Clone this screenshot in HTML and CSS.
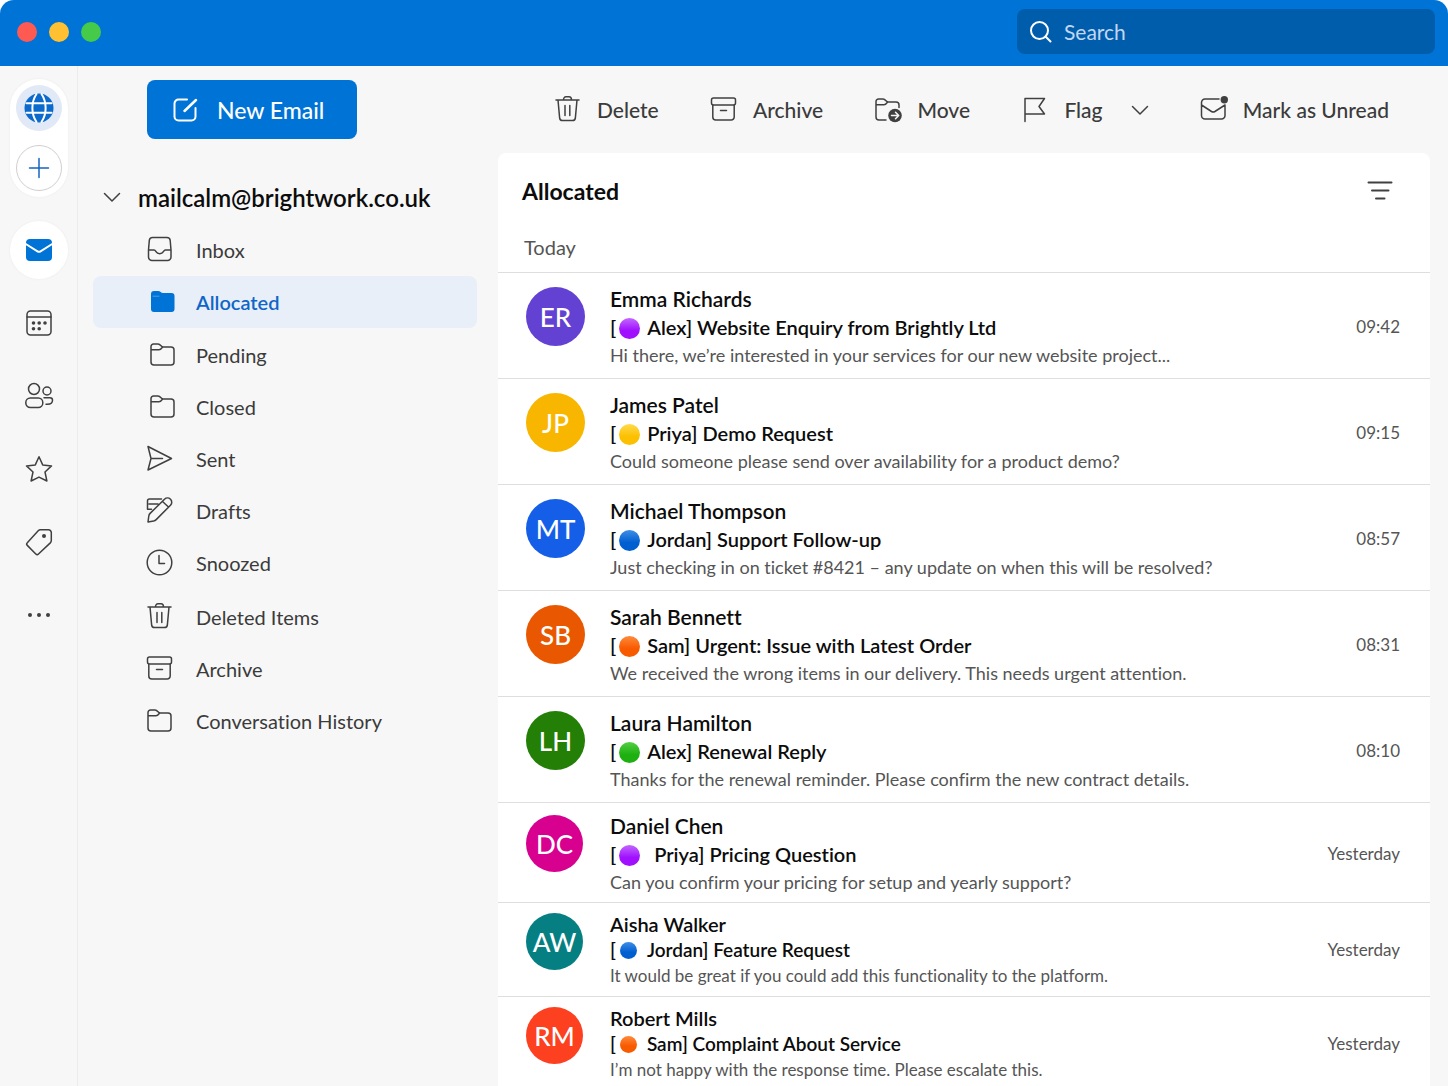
FILE: index.html
```html
<!DOCTYPE html>
<html lang="en">
<head>
  <meta charset="UTF-8">
  <meta name="viewport" content="width=device-width, initial-scale=1">
  <title>Mail - Allocated</title>
  <link rel="stylesheet" href="styles.css">
</head>
<body>

<!-- icon sprite -->
<svg class="sprite" xmlns="http://www.w3.org/2000/svg">
  <symbol id="i-folder" viewBox="0 0 28 28">
    <path d="M2 8.500V5.500a2.500 2.500 0 0 1 2.500-2.500h4.500c1.500 0 2 .6 3 1.800.7.900 1.200 1.200 2.500 1.200h7.500a3 3 0 0 1 3 3v12a3 3 0 0 1-3 3H5a3 3 0 0 1-3-3zM2 8.700h8c1.800 0 2.400-1.200 3.400-2.500"/>
  </symbol>
  <symbol id="i-trash" viewBox="0 0 28 28">
    <path d="M2 4h23M9.500 4c0-2 1-3.200 2.500-3.200h3c1.500 0 2.500 1.200 2.500 3.200M4 4l1.600 17.600a3 3 0 0 0 3 2.900h9.800a3 3 0 0 0 3-2.900L23 4M11 9.500v10M15.800 9.500v10"/>
  </symbol>
  <symbol id="i-archive" viewBox="0 0 28 28">
    <rect x="1.500" y="2" width="24" height="7" rx="2"/>
    <path d="M2.800 9v12a3 3 0 0 0 3 3h15.400a3 3 0 0 0 3-3V9M10.500 14.500h6"/>
  </symbol>
  <symbol id="i-chevron" viewBox="0 0 18 18">
    <path d="M1.500 5.500l7.500 7.500 7.500-7.500"/>
  </symbol>
</svg>

<div class="window">
  <header class="titlebar">
    <div class="lights">
      <span class="light red"></span>
      <span class="light yellow"></span>
      <span class="light green"></span>
    </div>
    <label class="search">
      <svg class="icon-search" viewBox="0 0 22 22" aria-hidden="true"><circle cx="9.500" cy="9.500" r="8.500"/><path d="M15.500 15.500l5 5"/></svg>
      <input type="search" placeholder="Search" aria-label="Search">
    </label>
  </header>

  <div class="layout">
    <!-- left rail -->
    <nav class="rail" aria-label="Apps">
      <div class="pill">
        <button class="round globe" aria-label="Accounts">
          <svg viewBox="0 0 30 30"><circle class="disc" cx="15" cy="15" r="14.500"/><path d="M12.500 1c-5.500 8-5.500 20 0 28M17.500 1c5.500 8 5.500 20 0 28M2.500 10.200h25M2.500 19.800h25"/></svg>
        </button>
        <button class="round add" aria-label="Add account">
          <svg viewBox="0 0 20 20"><path d="M10 .5v19M.5 10h19"/></svg>
        </button>
      </div>
      <button class="app active" aria-label="Mail">
        <svg viewBox="0 0 28 28"><rect class="fill" x="1" y="3" width="26" height="22" rx="4"/><path class="cut" d="M0 7.500l12.500 7.800q1.500.9 3 0L28 7.500"/></svg>
      </button>
      <button class="app" aria-label="Calendar">
        <svg viewBox="0 0 28 28"><rect x="2" y="2" width="24" height="24" rx="3.500"/><path d="M2 8h24"/><g class="dots"><circle cx="8.500" cy="14" r="1.800"/><circle cx="14.200" cy="14" r="1.800"/><circle cx="20" cy="14" r="1.800"/><circle cx="8.500" cy="19.800" r="1.800"/><circle cx="14.200" cy="19.800" r="1.800"/></g></svg>
      </button>
      <button class="app" aria-label="People">
        <svg viewBox="0 0 28 28"><circle cx="9" cy="7" r="5.500"/><circle cx="22" cy="9" r="4"/><rect x=".8" y="16" width="17" height="9.500" rx="4.500"/><path d="M19 15.800h6c1.500 0 2.500 1 2.500 2.500 0 2.500-2 4-5 4H21"/></svg>
      </button>
      <button class="app" aria-label="Favourites">
        <svg viewBox="0 0 28 28"><path d="M14 1.800l3.700 8.100 8.800 1-6.500 6.100 1.900 9-7.900-3.900-7.900 3.900 1.900-9-6.500-6.100 8.800-1z"/></svg>
      </button>
      <button class="app" aria-label="Tags">
        <svg viewBox="0 0 28 28"><path d="M15.500 1.800h8a2.800 2.800 0 0 1 2.800 2.800v8c0 1-.4 1.700-1 2.300L13.500 26c-.9.900-1.800.9-2.700 0l-8.500-8.600c-.9-.9-.9-1.800 0-2.700L13.200 2.800c.6-.6 1.300-1 2.300-1z"/><circle class="dot-hole" cx="19" cy="8" r="2"/></svg>
      </button>
      <button class="app" aria-label="More">
        <svg viewBox="0 0 28 28"><g class="dots"><circle cx="5" cy="14" r="2"/><circle cx="14" cy="14" r="2"/><circle cx="23" cy="14" r="2"/></g></svg>
      </button>
    </nav>

    <!-- folders -->
    <aside class="sidebar">
      <button class="new-email">
        <svg viewBox="0 0 26 26" aria-hidden="true"><path d="M15 2.500H6.500a4 4 0 0 0-4 4v13a4 4 0 0 0 4 4h13a4 4 0 0 0 4-4V11"/><path class="pen" d="M12.500 14L24 3"/></svg>
        New Email
      </button>
      <button class="account" aria-expanded="true">
        <svg class="chevron" aria-hidden="true"><use href="#i-chevron"/></svg>
        mailcalm@brightwork.co.uk
      </button>
      <nav class="folders" aria-label="Folders">
        <ul>
          <li><a href="#inbox"><svg viewBox="0 0 28 28"><path d="M2.500 14L3.300 4.500a3.300 3.300 0 0 1 3.300-3h14.300a3.300 3.300 0 0 1 3.300 3L25 14v7a3.500 3.500 0 0 1-3.500 3.500H6A3.500 3.500 0 0 1 2.500 21zM2.500 14h5.500c1.200 0 1.500.8 2 1.600 1.600 2.700 5.800 2.700 7.400 0 .5-.8.800-1.600 2-1.600H25"/></svg>Inbox</a></li>
          <li><a href="#allocated" class="selected" aria-current="page"><svg viewBox="-3 0 28 28"><path class="fill" d="M2 6a3 3 0 0 1 3-3h4c2.500 0 3 2 5 2h8.500a3 3 0 0 1 3 3v13a3 3 0 0 1-3 3H5a3 3 0 0 1-3-3z"/><path class="shine" d="M4 8.200h6"/></svg>Allocated</a></li>
          <li><a href="#pending"><svg><use href="#i-folder" x="3"/></svg>Pending</a></li>
          <li><a href="#closed"><svg><use href="#i-folder" x="3"/></svg>Closed</a></li>
          <li><a href="#sent"><svg viewBox="0 0 28 28"><path d="M2 1.500l23.500 12L2 25l3-11.500zM5 13.500h11.500"/></svg>Sent</a></li>
          <li><a href="#drafts"><svg viewBox="0 0 28 28"><path d="M2 25l.8-6c.2-1.200.5-1.800 1.300-2.600L18.500 2.200a4.200 4.200 0 0 1 6 6L10.200 22.600c-.8.800-1.500 1.200-2.600 1.500zM16.500 4.500l6 5.500M15.500 2H3.500c-1.300 0-2 .7-2 2v8.200h4M3 7h9"/></svg>Drafts</a></li>
          <li><a href="#snoozed"><svg viewBox="0 0 28 28"><circle cx="13.500" cy="13.500" r="12.300"/><path d="M13 6.500v8h5.500"/></svg>Snoozed</a></li>
        </ul>
        <ul>
          <li><a href="#deleted"><svg><use href="#i-trash"/></svg>Deleted Items</a></li>
          <li><a href="#archive"><svg><use href="#i-archive"/></svg>Archive</a></li>
          <li><a href="#history"><svg><use href="#i-folder"/></svg>Conversation History</a></li>
        </ul>
      </nav>
    </aside>

    <main class="content">
      <div class="toolbar">
        <button><svg><use href="#i-trash"/></svg>Delete</button>
        <button><svg><use href="#i-archive"/></svg>Archive</button>
        <button><svg viewBox="0 0 28 28"><path d="M12 24H5a3 3 0 0 1-3-3V5.500A2.500 2.500 0 0 1 4.500 3H9c1.500 0 2 .6 3 1.800.7.900 1.200 1.200 2.500 1.200H22a3 3 0 0 1 3 3v2.500M2 8.700h8c1.800 0 2.400-1.200 3.400-2.500"/><circle class="badge" cx="21" cy="19.500" r="6.800"/><path class="arrow" d="M17.500 19.500h7M21.500 16.200l3.200 3.300-3.200 3.300"/></svg>Move</button>
        <div class="split">
          <button><svg viewBox="0 0 28 28"><path d="M4 25.500V2.500h19.500l-5.500 8 5.500 7.500H4"/></svg>Flag</button>
          <button aria-label="Flag options"><svg class="chevron"><use href="#i-chevron"/></svg></button>
        </div>
        <button><svg viewBox="0 0 28 28"><path d="M19 3H5a3.500 3.500 0 0 0-3.500 3.500v13A3.500 3.500 0 0 0 5 23h16.500a3.500 3.500 0 0 0 3.500-3.500V9M1.500 9l10 6.500q1.700 1 3.400 0L25 9"/><circle class="badge" cx="24.300" cy="3.800" r="3.700"/></svg>Mark as Unread</button>
      </div>

      <section class="mail">
        <div class="mail-head">
          <h1>Allocated</h1>
          <button class="filter" aria-label="Filter">
            <svg viewBox="0 0 26 22"><path d="M1.500 2.500h23M5 10.500h16.500M9 18.500h8.500"/></svg>
          </button>
        </div>
        <h2 class="day">Today</h2>

        <ul class="messages">
          <li class="message">
            <span class="avatar indigo">ER</span>
            <div class="text">
              <p class="from">Emma Richards</p>
              <p class="subject">[<span class="dot purple"></span>Alex] Website Enquiry from Brightly Ltd</p>
              <p class="preview">Hi there, we’re interested in your services for our new website project...</p>
            </div>
            <time>09:42</time>
          </li>
          <li class="message">
            <span class="avatar amber">JP</span>
            <div class="text">
              <p class="from">James Patel</p>
              <p class="subject">[<span class="dot gold"></span>Priya] Demo Request</p>
              <p class="preview">Could someone please send over availability for a product demo?</p>
            </div>
            <time>09:15</time>
          </li>
          <li class="message">
            <span class="avatar blue">MT</span>
            <div class="text">
              <p class="from">Michael Thompson</p>
              <p class="subject">[<span class="dot azure"></span>Jordan] Support Follow-up</p>
              <p class="preview">Just checking in on ticket #8421 – any update on when this will be resolved?</p>
            </div>
            <time>08:57</time>
          </li>
          <li class="message">
            <span class="avatar orange">SB</span>
            <div class="text">
              <p class="from">Sarah Bennett</p>
              <p class="subject">[<span class="dot tangerine"></span>Sam] Urgent: Issue with Latest Order</p>
              <p class="preview">We received the wrong items in our delivery. This needs urgent attention.</p>
            </div>
            <time>08:31</time>
          </li>
          <li class="message">
            <span class="avatar forest">LH</span>
            <div class="text">
              <p class="from">Laura Hamilton</p>
              <p class="subject">[<span class="dot lime"></span>Alex] Renewal Reply</p>
              <p class="preview">Thanks for the renewal reminder. Please confirm the new contract details.</p>
            </div>
            <time>08:10</time>
          </li>
          <li class="message older">
            <span class="avatar magenta">DC</span>
            <div class="text">
              <p class="from">Daniel Chen</p>
              <p class="subject">[<span class="dot purple wide"></span>Priya] Pricing Question</p>
              <p class="preview">Can you confirm your pricing for setup and yearly support?</p>
            </div>
            <time>Yesterday</time>
          </li>
          <li class="message compact">
            <span class="avatar teal">AW</span>
            <div class="text">
              <p class="from">Aisha Walker</p>
              <p class="subject">[<span class="dot azure"></span>Jordan] Feature Request</p>
              <p class="preview">It would be great if you could add this functionality to the platform.</p>
            </div>
            <time>Yesterday</time>
          </li>
          <li class="message compact">
            <span class="avatar red">RM</span>
            <div class="text">
              <p class="from">Robert Mills</p>
              <p class="subject">[<span class="dot tangerine"></span>Sam] Complaint About Service</p>
              <p class="preview">I’m not happy with the response time. Please escalate this.</p>
            </div>
            <time>Yesterday</time>
          </li>
        </ul>
      </section>
    </main>
  </div>
</div>

</body>
</html>
```
FILE: styles.css
```css
* {
  box-sizing: border-box;
}

html {
  background: #fff;
}

body {
  margin: 0;
  font-family: Lato, "Open Sans", sans-serif;
  font-size: 20px;
  font-variant-ligatures: none;
  color: #3b3b3b;
}

h1, h2, p, ul {
  margin: 0;
  padding: 0;
}

ul {
  list-style: none;
}

button {
  border: none;
  padding: 0;
  background: none;
  font: inherit;
  color: inherit;
  cursor: pointer;
}

svg {
  display: block;
  flex: none;
  width: 28px;
  height: 28px;
  overflow: visible;
  fill: none;
  stroke: #404040;
  stroke-width: 1.5;
  stroke-linecap: round;
  stroke-linejoin: round;
}

.sprite {
  display: none;
}

.chevron {
  width: 18px;
  height: 18px;
}

.window {
  display: flex;
  flex-direction: column;
  height: 100vh;
  border-radius: 14px 14px 0 0;
  background: #f7f7f7;
  overflow: hidden;
}

/* title bar */
.titlebar {
  display: flex;
  align-items: center;
  justify-content: space-between;
  flex: none;
  height: 66px;
  padding: 0 13px 3px 17px;
  background: #0073d6;
}

.lights {
  display: flex;
  gap: 12px;
}

.light {
  width: 20px;
  height: 20px;
  border-radius: 50%;
}

.light.red { background: #ff5a52; }
.light.yellow { background: #ffc132; }
.light.green { background: #45ca49; }

.search {
  display: flex;
  align-items: center;
  gap: 12px;
  width: 418px;
  height: 45px;
  padding: 0 13px;
  border-radius: 8px;
  background: #005dac;
}

.icon-search {
  width: 22px;
  height: 22px;
  stroke: #fff;
  stroke-width: 2;
}

.search input {
  flex: 1;
  min-width: 0;
  border: none;
  padding: 0;
  outline: none;
  background: none;
  font: inherit;
  font-size: 21px;
  color: #fff;
}

.search input::placeholder {
  color: #c0d7f2;
  opacity: 1;
}

.layout {
  display: flex;
  flex: 1;
  min-height: 0;
}

/* rail */
.rail {
  display: flex;
  flex-direction: column;
  align-items: center;
  gap: 15px;
  flex: none;
  width: 78px;
  padding-top: 13px;
  border-right: 1px solid #ececec;
}

.pill {
  display: flex;
  flex-direction: column;
  align-items: center;
  gap: 14px;
  width: 58px;
  padding: 6px 0;
  margin-bottom: 9px;
  border-radius: 29px;
  background: #fff;
  box-shadow: 0 0 3px rgba(0, 0, 0, 0.05);
}

.round {
  display: flex;
  align-items: center;
  justify-content: center;
  width: 46px;
  height: 46px;
  border-radius: 50%;
}

.globe {
  background: #e0e9f5;
}

.globe svg {
  width: 30px;
  height: 30px;
  stroke: #fff;
  stroke-width: 2;
}

.globe .disc {
  fill: #0b6acb;
  stroke: none;
}

.add {
  border: 1px solid #cfcfcf;
}

.add svg {
  width: 20px;
  height: 20px;
  stroke: #1464c0;
}

.app {
  display: flex;
  align-items: center;
  justify-content: center;
  width: 58px;
  height: 58px;
  border-radius: 50%;
}

.app.active {
  background: #fff;
  box-shadow: 0 0 3px rgba(0, 0, 0, 0.05);
}

.fill {
  fill: #0073d6;
  stroke: none;
}

.cut {
  stroke: #fff;
  stroke-width: 2;
}

.dots,
.dot-hole {
  fill: #404040;
  stroke: none;
}

/* sidebar */
.sidebar {
  flex: 0 0 420px;
  padding: 14px 21px 0 15px;
}

.new-email {
  display: flex;
  align-items: center;
  gap: 19px;
  height: 59px;
  margin-left: 54px;
  padding: 0 33px 0 25px;
  border-radius: 8px;
  background: #0073d6;
  color: #fff;
  font-size: 23px;
  font-weight: 500;
}

.new-email svg {
  width: 26px;
  height: 26px;
  stroke: #fff;
  stroke-width: 2;
}

.new-email .pen {
  stroke-width: 2.5;
}

.account {
  display: flex;
  align-items: center;
  gap: 17px;
  height: 54px;
  margin: 31px 0 0 10px;
  color: #0c0c0c;
  font-size: 24px;
  font-weight: 600;
}

.folders {
  display: flex;
  flex-direction: column;
  gap: 2px;
}

.folders a {
  display: flex;
  align-items: center;
  gap: 22px;
  height: 52px;
  padding-left: 53px;
  border-radius: 8px;
  color: inherit;
  text-decoration: none;
}

.folders a.selected {
  margin-bottom: 1px;
  background: #e8eff8;
  color: #0f66c8;
  font-weight: 600;
}

.shine {
  stroke: #4f9fe4;
  stroke-width: 1;
}

/* toolbar */
.content {
  display: flex;
  flex-direction: column;
  flex: 1;
  min-width: 0;
  padding-right: 18px;
}

.toolbar {
  display: flex;
  align-items: center;
  justify-content: space-between;
  flex: none;
  height: 87px;
  padding: 0 41px 0 56px;
}

.toolbar button {
  display: flex;
  align-items: center;
  gap: 15px;
  font-size: 21px;
  font-weight: 500;
}

.split {
  display: flex;
  gap: 28px;
}

.badge {
  fill: #404040;
  stroke: none;
}

.arrow {
  stroke: #f7f7f7;
}

/* message list */
.mail {
  flex: 1;
  min-height: 0;
  border-radius: 8px 8px 0 0;
  background: #fff;
  overflow: hidden;
}

.mail-head {
  display: flex;
  align-items: center;
  justify-content: space-between;
  height: 76px;
  padding: 0 37px 0 24px;
}

.mail-head h1 {
  color: #0c0c0c;
  font-size: 23px;
  font-weight: 700;
}

.filter svg {
  width: 26px;
  height: 22px;
  stroke-width: 2;
}

.day {
  height: 43px;
  padding-left: 26px;
  color: #555;
  font-size: 20px;
  font-weight: 400;
  line-height: 36px;
}

.message {
  display: flex;
  align-items: flex-start;
  padding: 12px 30px 9px 28px;
  border-top: 1px solid #dedede;
  line-height: 28px;
}

.avatar {
  display: flex;
  align-items: center;
  justify-content: center;
  flex: none;
  width: 59px;
  height: 59px;
  margin: 2px 25px 0 0;
  border-radius: 50%;
  color: #fff;
  font-size: 26px;
  font-weight: 500;
}

.avatar.indigo { background: #6341d3; }
.avatar.amber { background: #f8b600; }
.avatar.blue { background: #155fe8; }
.avatar.orange { background: #e95800; }
.avatar.forest { background: #237f06; }
.avatar.magenta { background: #d8008f; }
.avatar.teal { background: #067f83; }
.avatar.red { background: #fc4020; }

.text {
  flex: 1;
  min-width: 0;
}

.from,
.subject {
  color: #0c0c0c;
  font-weight: 600;
}

.from {
  font-size: 21px;
}

.preview {
  color: #555;
  font-size: 18px;
}

.message time {
  align-self: center;
  color: #555;
  font-size: 17px;
}

.dot {
  display: inline-block;
  width: 21px;
  height: 21px;
  margin: 0 7px 0 3px;
  border-radius: 50%;
  vertical-align: -4px;
}

.dot.wide { margin-right: 14px; }
.dot.purple { background: linear-gradient(#c267ff, #a010ff 60%); }
.dot.gold { background: linear-gradient(#ffdb4d, #fcc000 60%); }
.dot.azure { background: linear-gradient(#3f8ee6, #005fd0 60%); }
.dot.tangerine { background: linear-gradient(#ff8a3c, #f85a00 60%); }
.dot.lime { background: linear-gradient(#54cf46, #1eb010 60%); }

.message.older {
  padding: 9px 30px 6px 28px;
}

.older .avatar {
  width: 57px;
  height: 57px;
  margin: 3px 27px 0 0;
}

.message.compact {
  padding: 8px 30px 7px 28px;
  line-height: 26px;
}

.compact .avatar {
  width: 57px;
  height: 57px;
  margin: 2px 27px 0 0;
}

.compact .from {
  font-size: 20px;
}

.compact .subject {
  font-size: 19px;
}

.compact .preview {
  font-size: 17px;
}

.compact .dot {
  width: 17px;
  height: 17px;
  margin: 0 10px 0 4px;
  vertical-align: -2px;
}
```
